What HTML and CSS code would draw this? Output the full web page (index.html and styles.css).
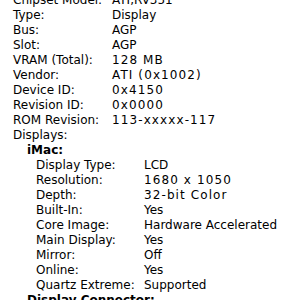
FILE: index.html
```html
<!DOCTYPE html>
<html lang="en">
<head>
    <meta charset="UTF-8">
    <title>Graphics/Displays</title>
    <link rel="stylesheet" href="styles.css">
</head>
<body>
    <div class="report">
        <dl class="props">
            <dt>Chipset Model:</dt><dd>ATI,RV351</dd>
            <dt>Type:</dt><dd>Display</dd>
            <dt>Bus:</dt><dd>AGP</dd>
            <dt>Slot:</dt><dd>AGP</dd>
            <dt>VRAM (Total):</dt><dd class="num">128 MB</dd>
            <dt>Vendor:</dt><dd class="num">ATI (0x1002)</dd>
            <dt>Device ID:</dt><dd class="num">0x4150</dd>
            <dt>Revision ID:</dt><dd class="num">0x0000</dd>
            <dt>ROM Revision:</dt><dd class="num">113-xxxxx-117</dd>
        </dl>
        <div class="group-title">Displays:</div>
        <div class="device">iMac:</div>
        <dl class="props sub">
            <dt>Display Type:</dt><dd>LCD</dd>
            <dt>Resolution:</dt><dd class="num">1680 x 1050</dd>
            <dt>Depth:</dt><dd class="num">32-bit Color</dd>
            <dt>Built-In:</dt><dd>Yes</dd>
            <dt>Core Image:</dt><dd>Hardware Accelerated</dd>
            <dt>Main Display:</dt><dd>Yes</dd>
            <dt>Mirror:</dt><dd>Off</dd>
            <dt>Online:</dt><dd>Yes</dd>
            <dt>Quartz Extreme:</dt><dd>Supported</dd>
        </dl>
        <div class="device">Display Connector:</div>
    </div>
</body>
</html>
```

FILE: styles.css
```css
body {
    margin: 0;
    background: #fff;
    font-family: "DejaVu Sans", "Lucida Grande", sans-serif;
    font-size: 12px;
    line-height: 15px;
    color: #000;
    overflow: hidden;
}
.report {
    margin-top: -7px;
    padding-left: 13px;
}
.props {
    display: grid;
    grid-template-columns: 99px 1fr;
    margin: 0;
}
.props dt,
.props dd {
    margin: 0;
    white-space: nowrap;
}
.props dd.num {
    letter-spacing: 1.1px;
}
.props.sub {
    padding-left: 23px;
    grid-template-columns: 108px 1fr;
}
.device {
    padding-left: 14px;
    font-weight: bold;
}
```
